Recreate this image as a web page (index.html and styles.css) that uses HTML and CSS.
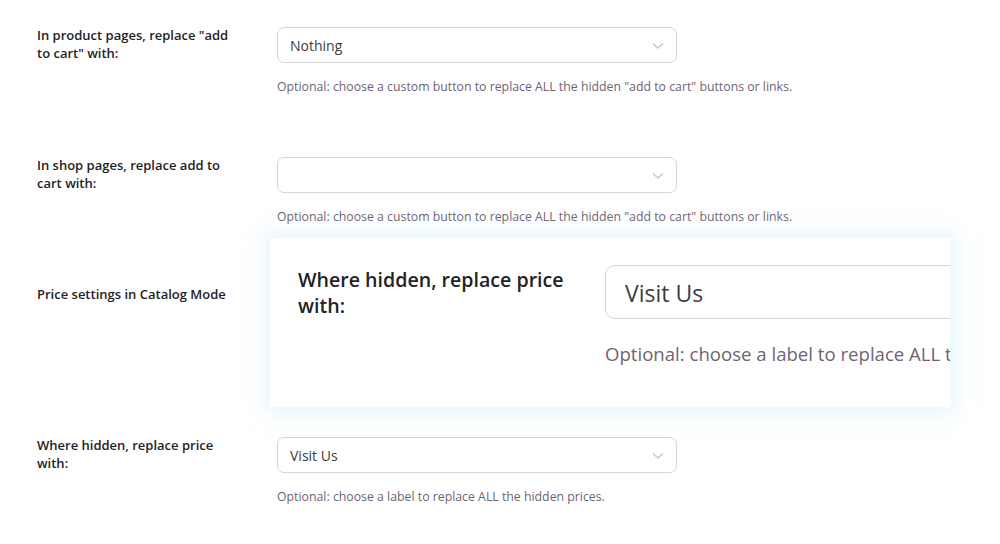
FILE: index.html
```html
<!DOCTYPE html>
<html>
<head>
<meta charset="utf-8">
<link rel="stylesheet" href="styles.css">
</head>
<body>
<div class="page">
  <div class="row row-1">
    <div class="label">In product pages, replace "add to cart" with:</div>
    <div class="field">
      <div class="select"><span class="value">Nothing</span><svg class="chev" viewBox="0 0 12 8" width="12" height="8"><path d="M1 1.5 L6 6 L11 1.5" fill="none" stroke="#c5c6c9" stroke-width="1.4"/></svg></div>
      <p class="desc">Optional: choose a custom button to replace ALL the hidden "add to cart" buttons or links.</p>
    </div>
  </div>
  <div class="row row-2">
    <div class="label">In shop pages, replace add to cart with:</div>
    <div class="field">
      <div class="select"><span class="value"></span><svg class="chev" viewBox="0 0 12 8" width="12" height="8"><path d="M1 1.5 L6 6 L11 1.5" fill="none" stroke="#c5c6c9" stroke-width="1.4"/></svg></div>
      <p class="desc">Optional: choose a custom button to replace ALL the hidden "add to cart" buttons or links.</p>
    </div>
  </div>
  <div class="row row-3">
    <div class="label">Price settings in Catalog Mode</div>
  </div>
  <div class="row row-4">
    <div class="label">Where hidden, replace price with:</div>
    <div class="field">
      <div class="select"><span class="value">Visit Us</span><svg class="chev" viewBox="0 0 12 8" width="12" height="8"><path d="M1 1.5 L6 6 L11 1.5" fill="none" stroke="#c5c6c9" stroke-width="1.4"/></svg></div>
      <p class="desc">Optional: choose a label to replace ALL the hidden prices.</p>
    </div>
  </div>

  <div class="zoom-card">
    <div class="zlabel">Where hidden, replace price with:</div>
    <div class="zfield">
      <div class="zselect"><span>Visit Us</span></div>
      <p class="zdesc">Optional: choose a label to replace ALL the hidden prices.</p>
    </div>
  </div>
</div>
</body>
</html>
```
FILE: styles.css
```css
html, body {
  margin: 0;
  padding: 0;
  background: #ffffff;
}
body {
  font-family: "Open Sans", "Noto Sans", sans-serif;
  width: 1000px;
  height: 544px;
  overflow: hidden;
}
.page {
  position: relative;
  width: 1000px;
  height: 544px;
}
.row {
  box-sizing: border-box;
  display: grid;
  grid-template-columns: 240px 600px;
  padding-left: 37px;
  padding-top: 27px;
}
.row-1 { height: 130px; }
.row-2 { height: 130px; }
.row-3 { height: 150px; padding-top: 26px; }
.row-4 { height: 134px; }

.label {
  max-width: 200px;
  font-size: 13px;
  font-weight: 600;
  color: #1f2326;
  line-height: 18px;
  margin-top: -1px;
}
.field { display: flex; flex-direction: column; align-items: flex-start; }
.select {
  box-sizing: border-box;
  height: 36px;
  width: 400px;
  border: 1px solid #d6d6d8;
  border-radius: 7px;
  display: flex;
  align-items: center;
  justify-content: space-between;
  padding: 0 12px 0 12px;
  font-size: 14px;
  color: #3d3d40;
}
.chev { margin-top: 1px; }
.desc {
  margin: 15px 0 0 0;
  font-size: 12.3px;
  line-height: 18px;
  color: #6f6470;
  white-space: nowrap;
}

.zoom-card {
  position: absolute;
  left: 270px;
  top: 238px;
  width: 680px;
  height: 169px;
  background: #ffffff;
  box-shadow: 0 0 18px 6px rgba(205, 240, 249, 0.5);
  overflow: hidden;
  display: flex;
  box-sizing: border-box;
  padding: 27px 0 0 28px;
}
.zlabel {
  width: 280px;
  flex: none;
  font-size: 19.6px;
  font-weight: 600;
  line-height: 26px;
  color: #1f2326;
  padding-right: 27px;
  padding-top: 2px;
}
.zfield { flex: none; display: flex; flex-direction: column; }
.zselect {
  box-sizing: border-box;
  width: 600px;
  height: 54px;
  border: 1px solid #d6d6d8;
  border-radius: 10px;
  display: flex;
  align-items: center;
  padding-left: 19px;
  padding-top: 2px;
  font-size: 23px;
  color: #3d3d40;
}
.zdesc {
  margin: 22px 0 0 0;
  font-size: 18.6px;
  line-height: 26px;
  color: #6f6470;
  white-space: nowrap;
}
```
